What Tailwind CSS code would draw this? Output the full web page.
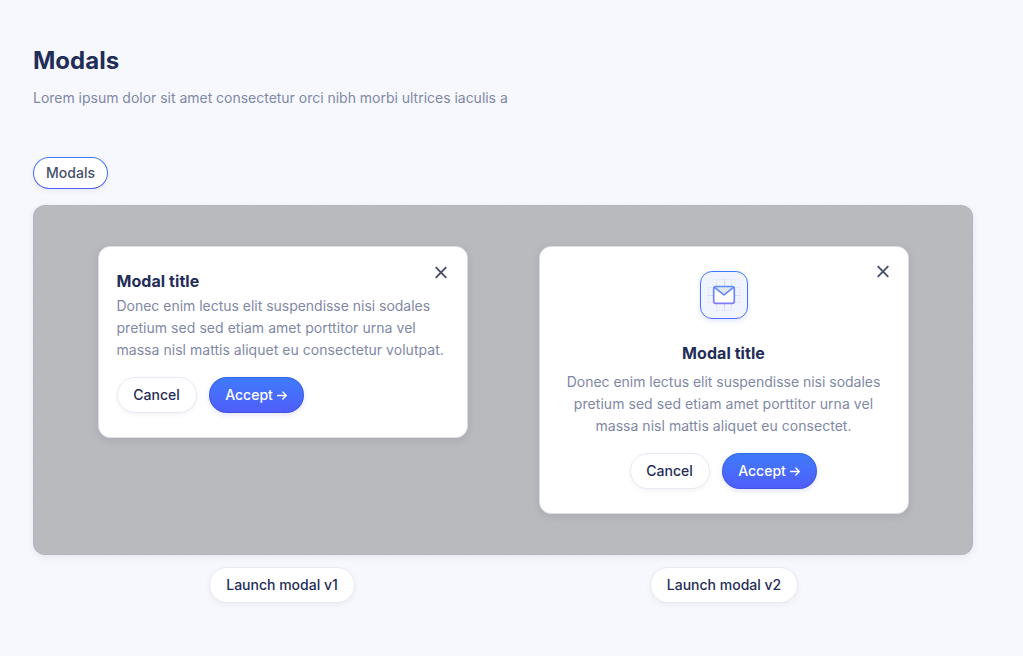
<!DOCTYPE html>
<html lang="en">
<head>
<meta charset="utf-8">
<title>Modals</title>
<script src="https://cdn.jsdelivr.net/npm/@tailwindcss/browser@4"></script>
</head>
<body class="h-[656px] w-[1023px] overflow-hidden bg-[#f7f8fd] pl-[33px] pt-[45px] font-['Inter','Liberation_Sans',sans-serif] text-sm text-[#1f2d58] antialiased">
  <header>
    <h1 class="text-[24px] leading-8 font-bold">Modals</h1>
    <p class="mt-[10px] text-[14px] leading-[22px] tracking-[-0.018px] whitespace-nowrap text-[#7f88a6]">Lorem ipsum dolor sit amet consectetur orci nibh morbi ultrices iaculis a</p>
  </header>

  <div class="mt-[48px] h-8 w-[75px] rounded-full bg-linear-to-b from-[#3e7bfa] to-[#4f5dfb] p-px shadow-[0_2px_6px_rgba(20,20,60,0.06)]">
    <div class="flex h-full items-center justify-center rounded-full bg-white font-medium text-[#474f6b]">Modals</div>
  </div>

  <section class="mt-4 flex h-[350px] w-[940px] items-start gap-[71px] rounded-xl border border-dashed border-[#aeb0cc] bg-[#b9babe] pt-[40px] pl-[64px] shadow-[0_2px_8px_rgba(20,20,60,0.07)]">
    <article class="relative h-[192px] w-[370px] rounded-xl border border-[#dcdee8] bg-white pt-[24px] pl-[17.5px] shadow-[0_2px_8px_rgba(20,20,60,0.1)]">
      <svg class="absolute top-[19px] right-[20px] h-[13px] w-3" viewBox="0 0 12 13" fill="none" stroke="#474f6b" stroke-width="1.9"><path d="M.7 1.2 11.3 11.8M11.3 1.2.7 11.8"/></svg>
      <h2 class="text-base leading-5 font-bold tracking-[0.06px]">Modal title</h2>
      <p class="mt-1 leading-[22px] whitespace-nowrap text-[#7f88a6]"><span class="tracking-[-0.02px]">Donec enim lectus elit suspendisse nisi sodales</span><br><span class="tracking-[0.05px]">pretium sed sed etiam amet porttitor urna vel</span><br><span class="tracking-[0.035px]">massa nisl mattis aliquet eu consectetur volutpat.</span></p>
      <div class="mt-4 flex gap-3 font-medium">
        <button class="h-9 w-20 rounded-full border border-[#e8e9f4] bg-white shadow-[0_2px_5px_rgba(20,20,60,0.05)]">Cancel</button>
        <button class="flex h-9 w-[95px] items-center justify-center gap-1 rounded-full bg-linear-to-b from-[#3e7bfa] to-[#4f5dfb] text-white shadow-[0_2px_5px_rgba(60,60,220,0.15),inset_0_0_0_1px_rgba(30,60,180,0.3)]">Accept
          <svg class="h-[9px] w-[10px]" viewBox="0 0 10 9" fill="none" stroke="currentColor" stroke-width="1.4" stroke-linecap="round" stroke-linejoin="round"><path d="M.7 4.5H9.2M5.8 1 9.3 4.5 5.8 8"/></svg>
        </button>
      </div>
    </article>

    <article class="relative flex h-[268px] w-[370px] flex-col items-center rounded-xl border border-[#dcdee8] bg-white pt-[24px] text-center shadow-[0_2px_8px_rgba(20,20,60,0.1)]">
      <svg class="absolute top-[18px] right-[19px] h-[13px] w-3" viewBox="0 0 12 13" fill="none" stroke="#474f6b" stroke-width="1.9"><path d="M.7 1.2 11.3 11.8M11.3 1.2.7 11.8"/></svg>
      <div class="size-12 rounded-[12px] shadow-[0_2px_5px_rgba(70,90,250,0.16)]">
        <svg class="size-12" viewBox="0 0 48 48" fill="none">
          <defs>
            <linearGradient id="line" x1="0" y1="0" x2="0" y2="1"><stop stop-color="#3e7bfa"/><stop offset="1" stop-color="#4f6dfb"/></linearGradient>
            <linearGradient id="env" x1="0" y1="14" x2="0" y2="33" gradientUnits="userSpaceOnUse"><stop stop-color="#5b90fb"/><stop offset="1" stop-color="#7f7bf8"/></linearGradient>
            <radialGradient id="fade" cx="24" cy="24" r="20" gradientUnits="userSpaceOnUse"><stop offset=".4" stop-color="#bfcaf6"/><stop offset="1" stop-color="#bfcaf6" stop-opacity="0"/></radialGradient>
          </defs>
          <rect x=".5" y=".5" width="47" height="47" rx="11.5" fill="#f0f4ff" stroke="url(#line)"/>
          <g stroke="url(#fade)"><path opacity=".6" d="M8.500 6V42M16.500 6V42M31.500 6V42M39.500 6V42M6 8.500H42M6 16.500H42M6 31.500H42M6 39.500H42"/><path d="M24.500 5V43M5 24.500H43"/></g>
          <rect x="13.700" y="15.500" width="20.600" height="16.800" rx="2" fill="#fff"/>
          <path d="M14 16H34L25 23.500Q24 24.300 23 23.500Z" fill="#dfe6f0"/>
          <path d="M14.300 16.200 22.900 23.200Q24 24 25.100 23.200L33.700 16.200" stroke="url(#env)" stroke-width="1.700"/>
          <rect x="13.700" y="15.500" width="20.600" height="16.800" rx="2" stroke="url(#env)" stroke-width="1.700"/>
        </svg>
      </div>
      <h2 class="mt-6 -ml-px text-base leading-5 font-bold tracking-[0.06px]">Modal title</h2>
      <p class="mt-2 -ml-px leading-[22px] whitespace-nowrap text-[#7f88a6]"><span class="tracking-[-0.02px]">Donec enim lectus elit suspendisse nisi sodales</span><br><span class="tracking-[0.05px]">pretium sed sed etiam amet porttitor urna vel</span><br><span class="tracking-[0.035px]">massa nisl mattis aliquet eu consectet.</span></p>
      <div class="mt-4 mr-[2px] flex gap-3 font-medium">
        <button class="h-9 w-20 rounded-full border border-[#e8e9f4] bg-white shadow-[0_2px_5px_rgba(20,20,60,0.05)]">Cancel</button>
        <button class="flex h-9 w-[95px] items-center justify-center gap-1 rounded-full bg-linear-to-b from-[#3e7bfa] to-[#4f5dfb] text-white shadow-[0_2px_5px_rgba(60,60,220,0.15),inset_0_0_0_1px_rgba(30,60,180,0.3)]">Accept
          <svg class="h-[9px] w-[10px]" viewBox="0 0 10 9" fill="none" stroke="currentColor" stroke-width="1.4" stroke-linecap="round" stroke-linejoin="round"><path d="M.7 4.5H9.2M5.800 1 9.300 4.500 5.800 8"/></svg>
        </button>
      </div>
    </article>
  </section>

  <div class="mt-3 flex gap-[295px] pl-[176px] font-medium">
    <button class="h-9 w-[146px] rounded-full border border-[#e8e9f4] bg-white whitespace-nowrap shadow-[0_2px_6px_rgba(20,20,60,0.05)]">Launch modal v1</button>
    <button class="h-9 w-[148px] rounded-full border border-[#e8e9f4] bg-white whitespace-nowrap shadow-[0_2px_6px_rgba(20,20,60,0.05)]">Launch modal v2</button>
  </div>
</body>
</html>
